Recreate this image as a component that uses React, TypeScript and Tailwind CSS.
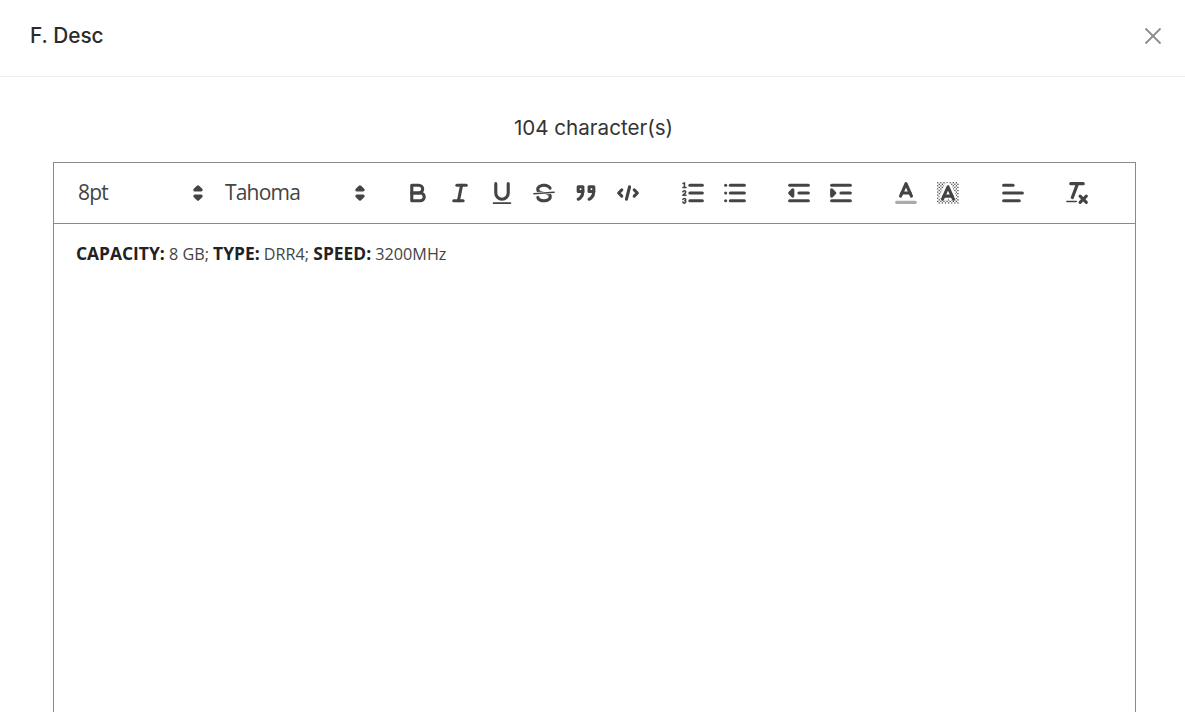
import type { ReactNode } from "react";

const stroke = "fill-none stroke-[#444] stroke-2 [stroke-linecap:round] [stroke-linejoin:round]";
const thin = "fill-none stroke-[#444] stroke-1 [stroke-linecap:round] [stroke-linejoin:round]";
const solid = "fill-[#444] stroke-none";

function Icon({ children, className }: { children: ReactNode; className?: string }) {
  return (
    <svg viewBox="0 0 18 18" className={`h-[28px] w-[28px] shrink-0 ${className ?? ""}`}>
      {children}
    </svg>
  );
}

function ToolButton({ children }: { children: ReactNode }) {
  return <button className="flex h-[28px] w-[42px] items-center justify-center">{children}</button>;
}

function Group({ children }: { children: ReactNode }) {
  return <span className="mr-[22.6px] flex">{children}</span>;
}

function Picker({ label, width }: { label: string; width: string }) {
  return (
    <span className={`flex items-center justify-between pl-[7.8px] ${width}`}>
      <span className="-mt-[1px] text-[21px] tracking-[-0.8px] text-[#444]">{label}</span>
      <Icon>
        <polygon className={stroke} points="7 11 9 13 11 11 7 11" />
        <polygon className={stroke} points="7 7 9 5 11 7 7 7" />
      </Icon>
    </span>
  );
}

const checker: [number, number][] = [];
for (let y = 2; y < 16; y++) {
  for (let x = 2; x < 16; x++) {
    if ((x + y) % 2 === 0) checker.push([x, y]);
  }
}

export default function App() {
  return (
    <div className="flex h-screen flex-col overflow-hidden bg-white font-['Inter',sans-serif]">
      <header className="flex h-[77px] shrink-0 items-center justify-between border-b border-[#eeeeee] pb-[5px] pl-[30px] pr-[22px]">
        <h1 className="text-[20.8px] font-medium text-[#2b2b2b]">F. Desc</h1>
        <svg viewBox="0 0 20 20" className="h-5 w-5 stroke-[#8c8c8c] stroke-[1.8]">
          <line x1="2.5" y1="2.5" x2="17.5" y2="17.5" />
          <line x1="17.5" y1="2.5" x2="2.5" y2="17.5" />
        </svg>
      </header>

      <p className="mt-[37px] pl-[2px] text-center text-[20.6px] leading-[28px] text-[#333]">104 character(s)</p>

      <div className="ml-[53px] mr-[49px] mt-[20px] flex-1 border border-b-0 border-[#8a8a8a] font-['Open_Sans',sans-serif]">
        <div className="flex h-[61px] items-center border-b border-[#8a8a8a] pl-[16.2px]">
          <span className="mr-[5px]">
            <Picker label="8pt" width="w-[142px]" />
          </span>
          <span className="mr-[23px]">
            <Picker label="Tahoma" width="w-[157px]" />
          </span>

          <Group>
            <ToolButton>
              <Icon>
                <path className={stroke} d="M5,4H9.5A2.5,2.5,0,0,1,12,6.5v0A2.5,2.5,0,0,1,9.5,9H5A0,0,0,0,1,5,9V4A0,0,0,0,1,5,4Z" />
                <path className={stroke} d="M5,9h5.5A2.5,2.5,0,0,1,13,11.5v0A2.5,2.5,0,0,1,10.5,14H5a0,0,0,0,1,0,0V9A0,0,0,0,1,5,9Z" />
              </Icon>
            </ToolButton>
            <ToolButton>
              <Icon>
                <line className={stroke} x1="7" x2="13" y1="4" y2="4" />
                <line className={stroke} x1="5" x2="11" y1="14" y2="14" />
                <line className={stroke} x1="8" x2="10" y1="14" y2="4" />
              </Icon>
            </ToolButton>
            <ToolButton>
              <Icon>
                <path className={stroke} d="M5,3V9a4.012,4.012,0,0,0,4,4H9a4.012,4.012,0,0,0,4-4V3" />
                <rect className={solid} height="1" rx=".5" ry=".5" width="12" x="3" y="15" />
              </Icon>
            </ToolButton>
            <ToolButton>
              <Icon>
                <line className={thin} x1="15.5" x2="2.5" y1="8.5" y2="9.5" />
                <path className={solid} d="M9.007,8C6.542,7.791,6,7.519,6,6.5,6,5.792,7.283,5,9,5c1.571,0,2.765.679,2.969,1.309a1,1,0,0,0,1.9-.617C13.356,4.106,11.354,3,9,3,6.2,3,4,4.538,4,6.5a3.2,3.2,0,0,0,.5,1.843Z" />
                <path className={solid} d="M8.984,10C11.457,10.208,12,10.479,12,11.5c0,.708-1.283,1.5-3,1.5-1.571,0-2.765-.679-2.969-1.309a1,1,0,1,0-1.9.617C4.644,13.894,6.646,15,9,15c2.8,0,5-1.538,5-3.5a3.2,3.2,0,0,0-.5-1.843Z" />
              </Icon>
            </ToolButton>
            <ToolButton>
              <Icon>
                <rect className={`${stroke} fill-[#444]`} height="3" width="3" x="4" y="5" />
                <rect className={`${stroke} fill-[#444]`} height="3" width="3" x="11" y="5" />
                <path className={stroke} d="M7,8c0,4.031-3,5-3,5" />
                <path className={stroke} d="M14,8c0,4.031-3,5-3,5" />
              </Icon>
            </ToolButton>
            <ToolButton>
              <Icon>
                <polyline className={stroke} points="5 7 3 9 5 11" />
                <polyline className={stroke} points="13 7 15 9 13 11" />
                <line className={stroke} x1="10" x2="8" y1="5" y2="13" />
              </Icon>
            </ToolButton>
          </Group>

          <Group>
            <ToolButton>
              <Icon>
                <line className={stroke} x1="7" x2="15" y1="4" y2="4" />
                <line className={stroke} x1="7" x2="15" y1="9" y2="9" />
                <line className={stroke} x1="7" x2="15" y1="14" y2="14" />
                <line className={thin} x1="2.5" x2="4.5" y1="5.5" y2="5.5" />
                <path className={solid} d="M3.5,6A0.5,0.5,0,0,1,3,5.5V3.085l-0.276.138A0.5,0.5,0,0,1,2.053,3c-0.124-.247-0.023-0.324.224-0.447l1-.5A0.5,0.5,0,0,1,4,2.5v3A0.5,0.5,0,0,1,3.5,6Z" />
                <path className={thin} d="M4.5,10.5h-2c0-.234,1.85-1.076,1.85-2.234A0.959,0.959,0,0,0,2.5,8.156" />
                <path className={thin} d="M2.5,14.846a0.959,0.959,0,0,0,1.85-.109A0.7,0.7,0,0,0,3.75,14a0.688,0.688,0,0,0,.6-0.736,0.959,0.959,0,0,0-1.85-.109" />
              </Icon>
            </ToolButton>
            <ToolButton>
              <Icon>
                <line className={stroke} x1="6" x2="15" y1="4" y2="4" />
                <line className={stroke} x1="6" x2="15" y1="9" y2="9" />
                <line className={stroke} x1="6" x2="15" y1="14" y2="14" />
                <line className={stroke} x1="3" x2="3" y1="4" y2="4" />
                <line className={stroke} x1="3" x2="3" y1="9" y2="9" />
                <line className={stroke} x1="3" x2="3" y1="14" y2="14" />
              </Icon>
            </ToolButton>
          </Group>

          <Group>
            <ToolButton>
              <Icon>
                <line className={stroke} x1="3" x2="15" y1="14" y2="14" />
                <line className={stroke} x1="3" x2="15" y1="4" y2="4" />
                <line className={stroke} x1="9" x2="15" y1="9" y2="9" />
                <polyline className={`${stroke} fill-[#444]`} points="5 7 5 11 3 9 5 7" />
              </Icon>
            </ToolButton>
            <ToolButton>
              <Icon>
                <line className={stroke} x1="3" x2="15" y1="14" y2="14" />
                <line className={stroke} x1="3" x2="15" y1="4" y2="4" />
                <line className={stroke} x1="9" x2="15" y1="9" y2="9" />
                <polyline className={`${stroke} fill-[#444]`} points="3 7 3 11 5 9 3 7" />
              </Icon>
            </ToolButton>
          </Group>

          <Group>
            <ToolButton>
              <Icon>
                <line className="stroke-[#aaa] stroke-2 [stroke-linecap:round]" x1="3" x2="15" y1="15" y2="15" />
                <polyline className={stroke} points="5.5 11 9 3 12.5 11" />
                <line className={stroke} x1="11.63" x2="6.38" y1="9" y2="9" />
              </Icon>
            </ToolButton>
            <ToolButton>
              <Icon>
                <g className={solid}>
                  {checker.map(([x, y]) => (
                    <rect key={`${x}-${y}`} x={x} y={y} width="0.8" height="0.8" />
                  ))}
                </g>
                <polyline className="fill-white stroke-white stroke-[5] [stroke-linejoin:round]" points="5.5 13 9 5 12.5 13" />
                <polyline className={stroke} points="5.5 13 9 5 12.5 13" />
                <line className={stroke} x1="11.63" x2="6.38" y1="11" y2="11" />
              </Icon>
            </ToolButton>
          </Group>

          <Group>
            <ToolButton>
              <Icon>
                <line className={stroke} x1="3" x2="15" y1="9" y2="9" />
                <line className={stroke} x1="3" x2="13" y1="14" y2="14" />
                <line className={stroke} x1="3" x2="9" y1="4" y2="4" />
              </Icon>
            </ToolButton>
          </Group>

          <ToolButton>
            <Icon>
              <line className={stroke} x1="5" x2="13" y1="3" y2="3" />
              <line className={stroke} x1="6" x2="9.35" y1="12" y2="3" />
              <line className={stroke} x1="11" x2="15" y1="11" y2="15" />
              <line className={stroke} x1="15" x2="11" y1="11" y2="15" />
              <rect className={solid} height="1" rx=".5" ry=".5" width="7" x="2" y="14" />
            </Icon>
          </ToolButton>
        </div>

        <p className="px-[22px] pt-[18px] text-[16.2px] leading-[22px] text-[#444]">
          <strong className="text-[17.4px] font-bold text-[#222]">CAPACITY:</strong> 8 GB; <strong className="text-[17.4px] font-bold text-[#222]">TYPE:</strong> DRR4;{" "}
          <strong className="text-[17.4px] font-bold text-[#222]">SPEED:</strong> 3200MHz
        </p>
      </div>
    </div>
  );
}
